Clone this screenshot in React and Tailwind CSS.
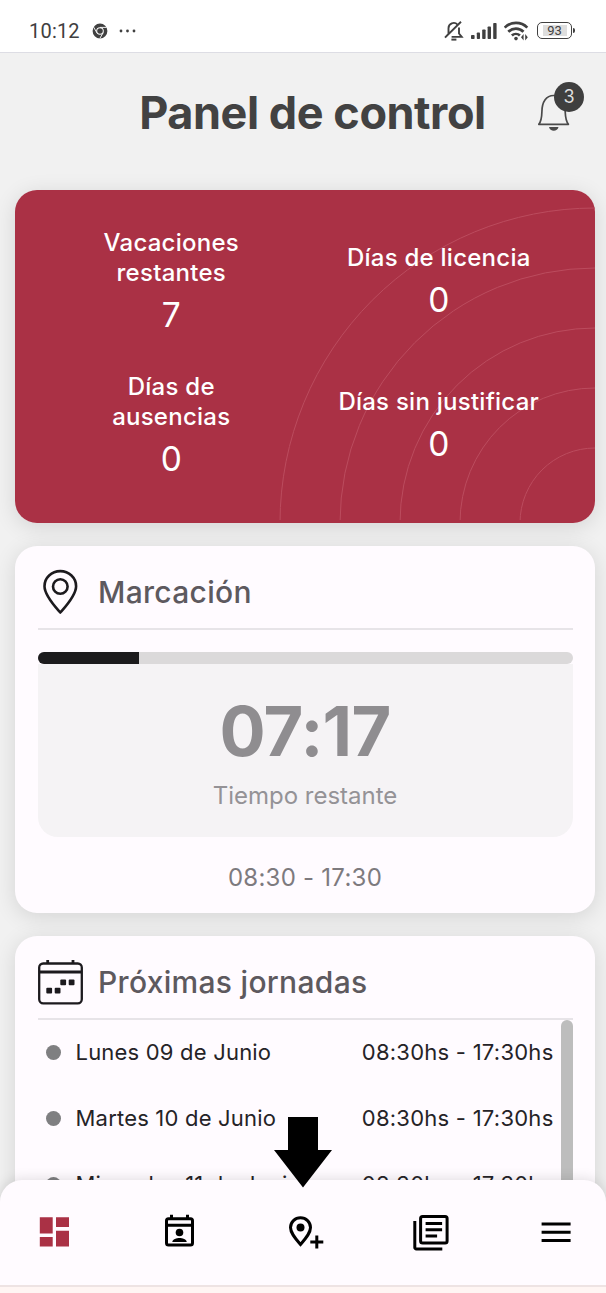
const STATS = [
  { label: ["Vacaciones", "restantes"], value: 7 },
  { label: ["Días de licencia"], value: 0 },
  { label: ["Días de", "ausencias"], value: 0 },
  { label: ["Días sin justificar"], value: 0 },
];

const SHIFTS = ["Lunes 09 de Junio", "Martes 10 de Junio", "Miercoles 11 de Junio"];

function StatusBar() {
  return (
    <div className="flex h-[53px] items-center border-b border-[#dddde4] bg-white pt-[9px] pr-[31px] pl-[29px] text-[#404040]">
      <span className="font-[Roboto] text-[20px] tracking-[0.2px]">10:12</span>
      <svg className="ml-[12px]" width="16" height="16" viewBox="0 0 16 16" fill="none">
        <circle cx="8" cy="8" r="5.6" stroke="currentColor" strokeWidth="3.6" />
        <circle cx="8" cy="8" r="2.8" fill="currentColor" />
        <path d="M8 4.4h6.6M4.9 9.8 1.6 4.1M11.1 9.8l-3.3 5.7" stroke="#fff" strokeWidth="0.9" />
      </svg>
      <svg className="ml-[11px]" width="18" height="4" viewBox="0 0 18 4" fill="currentColor">
        <circle cx="2" cy="2" r="1.4" />
        <circle cx="8.5" cy="2" r="1.4" />
        <circle cx="15" cy="2" r="1.4" />
      </svg>
      <div className="ml-auto flex items-center">
        <svg width="20" height="22" viewBox="0 0 20 22" fill="none" stroke="currentColor" strokeWidth="1.9">
          <path d="M4.500 10.500V8.200a5.200 5.200 0 0 1 9-3.600M15 7.500v6l2.700 3.400H7.600M1 17.600 17 1.800M4.500 9.500v4.400L1 17.600" />
          <path d="M7.400 19.600h5" strokeWidth="2" />
        </svg>
        <svg className="ml-[7px]" width="26" height="18" viewBox="0 0 26 18" fill="currentColor">
          <rect x="0" y="13" width="3.6" height="4" rx="0.8" />
          <rect x="5.8" y="10.5" width="3.2" height="6.5" rx="0.8" />
          <rect x="11.2" y="7.5" width="3.4" height="9.5" rx="0.8" />
          <rect x="16.6" y="4.5" width="3.4" height="12.5" rx="0.8" />
          <rect x="22.2" y="1" width="3.4" height="16" rx="0.8" />
        </svg>
        <svg className="ml-[7px]" width="26" height="20" viewBox="0 0 26 20" fill="none" stroke="currentColor" strokeWidth="2.7">
          <path d="M0.700 6.600a16 16 0 0 1 22.600 0M4.300 10.800a10.800 10.800 0 0 1 15.200 0M7.900 14.600a5.800 5.800 0 0 1 8 0" />
          <circle cx="12" cy="17.600" r="1.800" fill="currentColor" stroke="none" />
          <path d="M19.600 13v6.400l-2.600-3.200zM21.200 19.400V13l2.600 3.200z" fill="currentColor" stroke="none" />
        </svg>
        <div className="ml-[7px] flex h-[17px] w-[35px] items-center justify-center rounded-[5px] border-[1.8px] border-current p-[2px]">
          <span className="flex h-full w-[24px] items-center justify-center bg-[#dedede] font-[Roboto] text-[13px] leading-none">93</span>
        </div>
        <div className="ml-px h-[5px] w-[2px] rounded-r bg-current" />
      </div>
    </div>
  );
}

function Header() {
  return (
    <header className="relative flex h-[137px] justify-center pt-[30px] pl-[19px]">
      <h1 className="text-[45px] leading-[60px] font-bold tracking-[-0.45px] text-[#424242]">Panel de control</h1>
      <div className="absolute top-[29px] right-[20px] h-[52px] w-[50px]">
        <svg width="50" height="52" viewBox="0 0 50 52" fill="none" stroke="#4a4a4a" strokeWidth="1.7">
          <path d="M2.8 42.300h29.600c-2.600-3.400-3-7.500-3.200-12.600C29 19.500 24.500 13.500 17.500 13.500S6 19.500 5.900 29.700c-.1 5.100-.5 9.200-3.100 12.600Z" strokeLinejoin="round" />
          <path d="M13 45h9.500c-.6 2.600-2.400 3.800-4.750 3.800S13.600 47.600 13 45Z" fill="#4a4a4a" stroke="none" />
        </svg>
        <span className="absolute top-0 right-[2px] flex size-[30px] items-center justify-center rounded-full bg-[#3f3f3f] text-[18px] leading-none text-[#dedede]">
          3
        </span>
      </div>
    </header>
  );
}

function Summary() {
  return (
    <section className="relative h-[333px] overflow-hidden rounded-[22px] bg-[#aa3145]">
      <svg className="absolute top-0 left-0" width="580" height="330" viewBox="0 0 580 330" fill="none" stroke="#bb4c5e" strokeWidth="1">
        {[75, 135, 195, 255, 315].map((r) => (
          <circle key={r} cx="580" cy="333" r={r} />
        ))}
      </svg>
      <div className="relative grid grid-cols-2 gap-y-9 px-[22.5px] pt-[38px] text-center text-white">
        {STATS.map((stat) => (
          <div key={stat.label[0]} className="flex h-[108px] flex-col justify-center">
            {stat.label.map((line) => (
              <span key={line} className="text-[24px] leading-[30px] font-medium tracking-[0.25px]">{line}</span>
            ))}
            <span className="mt-[6px] text-[33.5px] leading-[42px]">{stat.value}</span>
          </div>
        ))}
      </div>
    </section>
  );
}

function CardTitle({ icon, children }) {
  return (
    <div className="flex h-[84px] items-center border-b-2 border-[#e7e4e8] pt-[10px]">
      {icon}
      <h2 className="ml-[15.5px] text-[30px] leading-[40px] font-medium tracking-[0.3px] text-[#5d595e]">{children}</h2>
    </div>
  );
}

function PinIcon() {
  return (
    <svg width="45" height="46" viewBox="0 0 45 46" fill="none" stroke="#1c1a1e" strokeWidth="2.6">
      <path d="M22.300 43.500C17 37.500 6.500 26.500 6.500 17.200a15.800 15.100 0 0 1 31.600 0C38.100 26.500 27.600 37.500 22.300 43.500Z" strokeLinejoin="round" />
      <circle cx="22.300" cy="17.500" r="7.300" />
    </svg>
  );
}

function CalendarIcon() {
  return (
    <svg width="45" height="46" viewBox="0 0 45 46" fill="none" stroke="#1c1a1e" strokeWidth="2.300">
      <rect x="1.200" y="4.500" width="42.600" height="39.800" rx="4" />
      <path d="M1 13h43" strokeWidth="3" />
      <path d="M9.700 1v4M35 1v4" strokeWidth="2.800" />
      <g fill="#1c1a1e" stroke="none">
        <rect x="22.300" y="20.500" width="5.800" height="5.800" rx="1" />
        <rect x="30.700" y="20.500" width="5.800" height="5.800" rx="1" />
        <rect x="8.300" y="28.800" width="5.800" height="5.800" rx="1" />
        <rect x="16.700" y="28.800" width="5.800" height="5.800" rx="1" />
      </g>
    </svg>
  );
}

function ClockCard() {
  return (
    <section className="mt-[22.5px] h-[367.5px] rounded-[22px] bg-[#fffbff] px-[22.5px] shadow-[0_4px_22px_rgba(0,0,0,0.12)]">
      <CardTitle icon={<PinIcon />}>Marcación</CardTitle>
      <div className="mt-[22px] h-[12px] overflow-hidden rounded-[6px] bg-[#dbd9da]">
        <div className="h-full w-[19%] bg-[#1c1b1d]" />
      </div>
      <div className="flex h-[173px] flex-col items-center rounded-b-[20px] bg-[#f5f3f5] pt-[33px]">
        <span className="text-[68.5px] leading-[70px] font-bold tracking-[-0.7px] text-[#8f8d90]">07:17</span>
        <span className="mt-[14px] text-[24px] leading-[30px] text-[#949296]">Tiempo restante</span>
      </div>
      <p className="mt-[26px] text-center text-[24px] leading-[30px] tracking-[0.25px] text-[#7d7a7e]">08:30 - 17:30</p>
    </section>
  );
}

function ShiftsCard() {
  return (
    <section className="mt-[22.5px] h-[400px] rounded-[22px] bg-[#fffbff] px-[22.5px] shadow-[0_4px_22px_rgba(0,0,0,0.12)]">
      <CardTitle icon={<CalendarIcon />}>Próximas jornadas</CardTitle>
      <div className="flex">
        <ul className="flex-1 pr-[7px] pl-[8px] text-[22px] text-[#252327]">
          {SHIFTS.map((day) => (
            <li key={day} className="flex h-[66px] items-center">
              <span className="mr-[15px] size-[15px] rounded-full bg-[#7f7f81]" />
              <span className="tracking-[0.2px]">{day}</span>
              <span className="ml-auto tracking-[0.25px]">08:30hs - 17:30hs</span>
            </li>
          ))}
        </ul>
        <div className="h-[260px] w-[12px] rounded-t-[6px] bg-[#bdbdbd]" />
      </div>
    </section>
  );
}

function NavBar() {
  return (
    <nav className="absolute inset-x-0 bottom-[8px] flex h-[105px] items-center justify-between rounded-t-[22px] bg-[#fffbff] pr-[30px] pl-[34px] shadow-[0_0_14px_rgba(0,0,0,0.14)]">
      <svg width="40" height="40" viewBox="0 0 40 40" fill="#aa3145">
        <path d="M5.800 4.300h12.900v16.300H5.800zM22 4.300h13v9.700H22zM5.800 24h12.900v9.600H5.800zM22 17.800h13v15.800H22z" />
      </svg>
      <svg width="40" height="40" viewBox="0 0 40 40" fill="none" stroke="#000" strokeWidth="3">
        <rect x="6.500" y="5.800" width="26" height="26.200" rx="2" />
        <path d="M5.500 12.300h28M11.500 1.800v5M27.500 1.800v5" />
        <circle cx="19.500" cy="19.500" r="3.800" fill="#000" stroke="none" />
        <path d="M12.300 29c0-2.600 4.500-4 7.200-4s7.200 1.400 7.200 4Z" fill="#000" stroke="none" />
      </svg>
      <svg width="40" height="40" viewBox="0 0 40 40" fill="none" stroke="#000" strokeWidth="3">
        <path d="M15.500 31.500C10 25 5.500 20 5.500 14.500 5.500 9 10 4.800 15.500 4.800s10 4.200 10 9.700C25.500 20 21 25 15.500 31.500Z" />
        <circle cx="15.500" cy="14.500" r="4" fill="#000" stroke="none" />
        <path d="M25.300 29h13M31.800 22.500v13" />
      </svg>
      <svg width="40" height="40" viewBox="0 0 40 40" fill="none" stroke="#000" strokeWidth="3">
        <rect x="9.600" y="3.500" width="26.500" height="26.500" rx="2" />
        <path d="M3.800 8v26.500a1.500 1.500 0 0 0 1.500 1.500h26M14.600 10.500h16.500M14.600 16.700h16.500M14.600 23h11.500" />
      </svg>
      <svg width="40" height="40" viewBox="0 0 40 40" fill="none" stroke="#000" strokeWidth="2.900">
        <path d="M5.600 11h29M5.600 19.300h29M5.600 27.500h29" />
      </svg>
    </nav>
  );
}

export default function App() {
  return (
    <div className="relative h-[1293px] w-[606px] overflow-hidden bg-[#f1f1f1] font-[Inter,sans-serif]">
      <StatusBar />
      <Header />
      <main className="pr-[11px] pl-[15px]">
        <div className="rounded-[22px] shadow-[0_4px_22px_rgba(0,0,0,0.12)]">
          <Summary />
        </div>
        <ClockCard />
        <ShiftsCard />
      </main>
      <NavBar />
      <div className="absolute inset-x-0 bottom-0 h-[8px] border-t-2 border-[#eee3e3] bg-[#fff5f3]" />
      {/* Arrow pointing at the clock-in button */}
      <svg className="absolute top-[1117px] left-[274px]" width="58" height="71" viewBox="0 0 58 71">
        <path d="M14 0h30v33h14L29 70.500 0 33h14z" />
      </svg>
    </div>
  );
}
